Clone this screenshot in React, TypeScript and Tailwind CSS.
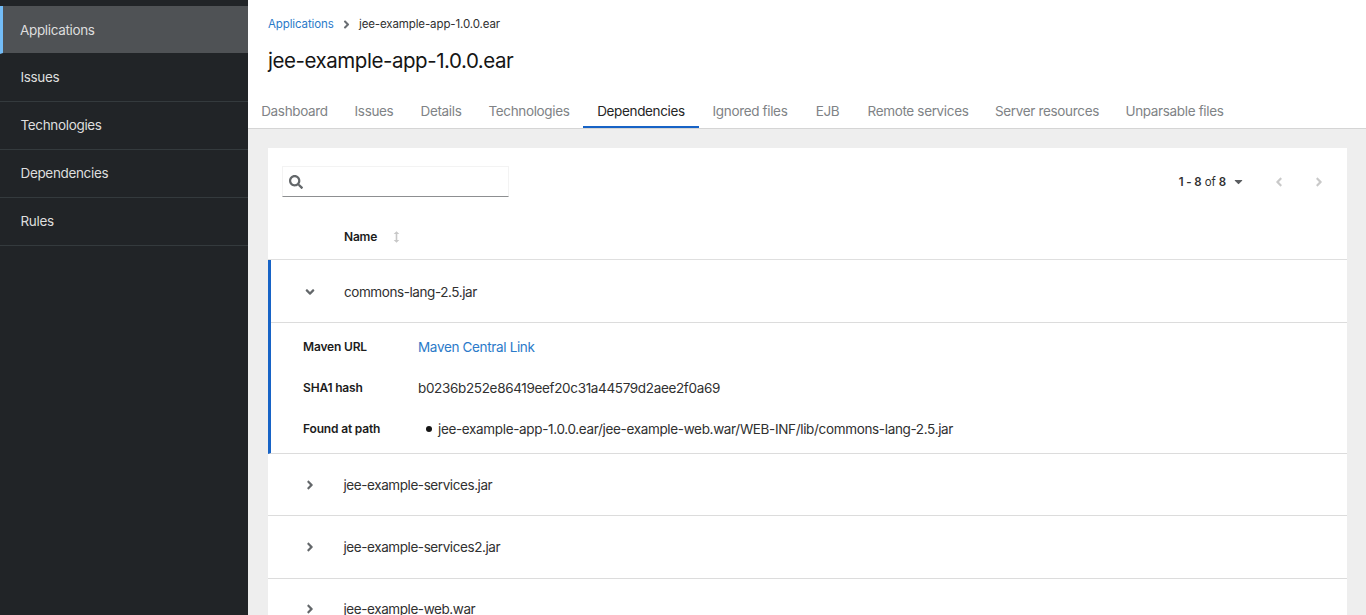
import React from "react";
import { FaAngleDown, FaAngleLeft, FaAngleRight, FaCaretDown, FaSearch } from "react-icons/fa";

const navItems = ["Applications", "Issues", "Technologies", "Dependencies", "Rules"];

const tabs = [
  { label: "Dashboard", size: "w-[93px]" },
  { label: "Issues", size: "w-[66px]" },
  { label: "Details", size: "w-[68px]" },
  { label: "Technologies", size: "w-[108px]" },
  { label: "Dependencies", size: "w-[116px]", active: true },
  { label: "Ignored files", size: "w-[102px]" },
  { label: "EJB", size: "w-[53px]" },
  { label: "Remote services", size: "w-[128px]" },
  { label: "Server resources", size: "w-[130px]" },
  { label: "Unparsable files", size: "w-[125px]" },
];

const rows = [
  { label: "jee-example-services.jar", size: "h-[62px]" },
  { label: "jee-example-services2.jar", size: "h-[63px]" },
  { label: "jee-example-web.war", size: "h-[61px]" },
];

function SortIcon() {
  return (
    <svg className="h-3 w-[7px]" viewBox="0 0 7 12" fill="#c8c8c8">
      <path d="M3.5 0.3 6.3 3H4.3v6h2L3.5 11.7 0.7 9h2V3h-2z" />
    </svg>
  );
}

function Detail({ label, children }: { label: string; children: React.ReactNode }) {
  return (
    <div className="flex h-[41px] items-center">
      <div className="w-[115px] pt-px text-[12px] font-semibold tracking-[-0.17px] text-[#1c1c1c]">{label}</div>
      <div>{children}</div>
    </div>
  );
}

export default function App() {
  return (
    <div className="flex h-[615px] w-[1366px] overflow-hidden bg-[#eeeeee] font-['Inter',sans-serif] text-[13.5px] leading-5 tracking-[-0.34px] text-[#303030]">
      <nav className="w-[248px] shrink-0 bg-[#212427] pt-[6px] text-[#dedede]">
        {navItems.map((item, i) => (
          <a
            key={item}
            className={
              i === 0
                ? "flex h-12 items-center border-b border-l-[3px] border-b-[#212427] border-l-[#73bcf7] bg-[#4f5255] pl-[17px]"
                : "flex h-12 items-center border-b border-[#343a3d] pb-px pl-[20.5px]"
            }
          >
            {item}
          </a>
        ))}
      </nav>
      <main className="flex w-[1118px] flex-col">
        <header className="flex h-[129px] shrink-0 flex-col border-b border-[#d5d5d5] bg-white">
          <div className="flex h-12 shrink-0 items-center pl-5 text-[11.5px] tracking-[-0.12px]">
            <a className="w-[73px] text-[#2b7ac9]">Applications</a>
            <FaAngleRight className="mr-[7px] h-[13px] w-[11px] text-[#6a6e73]" />
            <span>jee-example-app-1.0.0.ear</span>
          </div>
          <h1 className="h-[47px] shrink-0 pl-5 text-[20.5px] leading-[26px] tracking-[-0.45px] text-[#151515]">jee-example-app-1.0.0.ear</h1>
          <div className="flex flex-1">
            {tabs.map((t) => (
              <div
                key={t.label}
                className={`${t.size} flex shrink-0 items-center justify-center border-b-2 whitespace-nowrap ${t.active ? "border-[#1763c6] text-[#252525]" : "border-transparent text-[#808386]"}`}
              >
                {t.label}
              </div>
            ))}
          </div>
        </header>
        <section className="mt-[19px] ml-5 w-[1079px] flex-1 bg-white">
          <div className="flex h-[67px] items-center justify-between pl-[14px]">
            <div className="flex h-[31px] w-[227px] items-center border border-[#f3f3f3] border-b-[#8d8f91] pl-[6px]">
              <FaSearch className="size-[14px] text-[#63676a]" />
            </div>
            <div className="flex items-center text-[11.5px] tracking-[-0.1px]">
              <span><b className="font-semibold">1 - 8</b> of <b className="font-semibold">8</b></span>
              <FaCaretDown className="ml-2 h-[13px] w-[9px] text-[#5b5e61]" />
              <FaAngleLeft className="ml-[29px] size-[14px] text-[#c9c9c9]" />
              <FaAngleRight className="mr-[21px] ml-[26px] size-[14px] text-[#c9c9c9]" />
            </div>
          </div>
          <div className="flex h-[45px] items-center gap-4 border-b border-[#dfdfdf] pl-[76px] text-[12px] font-semibold tracking-[-0.2px]">
            <span className="text-[#1c1c1c]">Name</span>
            <SortIcon />
          </div>
          <div className="border-b border-l-[3px] border-b-[#dcdcdc] border-l-[#1763c6]">
            <div className="flex h-[63px] items-center border-b border-[#dcdcdc] pt-px pl-8 tracking-[-0.42px]">
              <FaAngleDown className="mr-[27px] h-[14px] w-[14px] text-[#63676a]" />
              commons-lang-2.5.jar
            </div>
            <div className="h-[130px] pt-[3px] pl-8">
              <Detail label="Maven URL"><a className="text-[#2b7ac9]">Maven Central Link</a></Detail>
              <Detail label="SHA1 hash">b0236b252e86419eef20c31a44579d2aee2f0a69</Detail>
              <Detail label="Found at path">
                <div className="flex items-center pl-2">
                  <span className="mr-[6px] size-[6px] rounded-full bg-[#151515]" />
                  jee-example-app-1.0.0.ear/jee-example-web.war/WEB-INF/lib/commons-lang-2.5.jar
                </div>
              </Detail>
            </div>
          </div>
          {rows.map((row) => (
            <div key={row.label} className={`${row.size} flex items-center border-b border-[#dcdcdc] pl-[35px] tracking-[-0.42px]`}>
              <FaAngleRight className="mr-[26.5px] size-[14px] text-[#63676a]" />
              {row.label}
            </div>
          ))}
        </section>
      </main>
    </div>
  );
}
